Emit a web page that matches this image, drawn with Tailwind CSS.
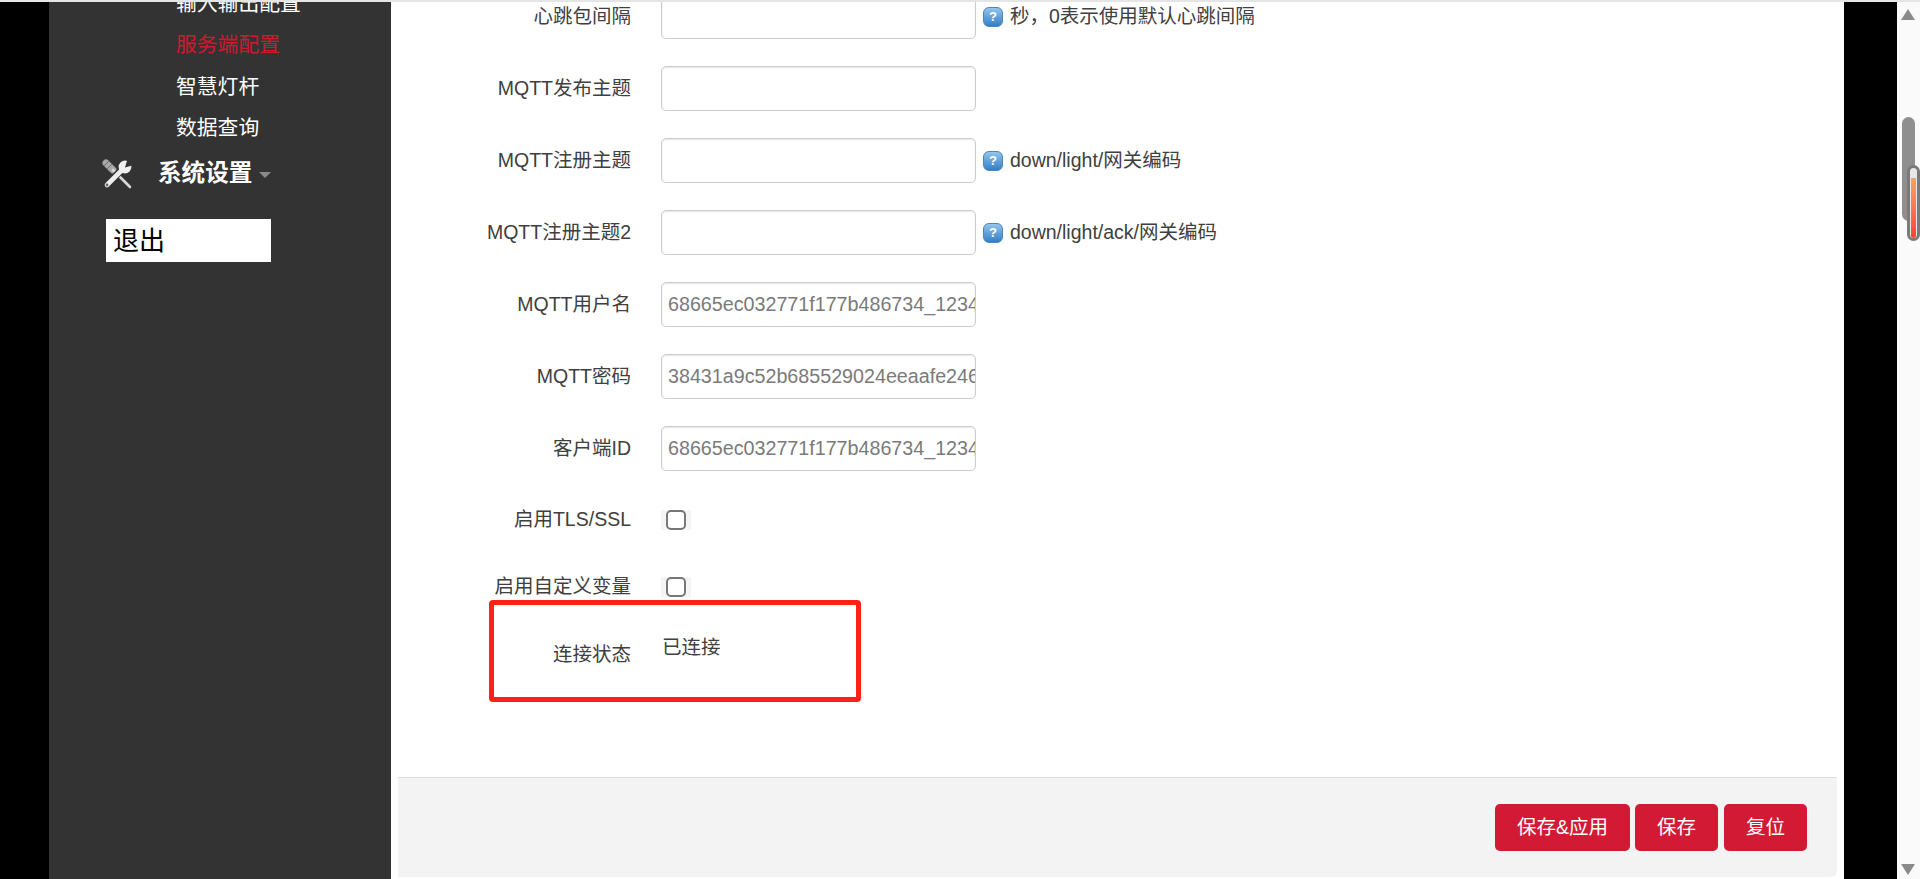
<!DOCTYPE html>
<html lang="zh-CN">
<head>
<meta charset="utf-8">
<title>服务端配置</title>
<script src="https://cdn.jsdelivr.net/npm/@tailwindcss/browser@4"></script>
</head>
<body class="m-0 overflow-hidden">
<div class="flex h-[879px] w-[1920px] overflow-hidden border-t-2 border-[#e5e5e5] bg-black font-['Liberation_Sans','Noto_Sans_CJK_SC',sans-serif] text-[19.5px] text-[#404040]">
  <div class="w-[49px] shrink-0 bg-black"></div>

  <aside class="w-[342px] shrink-0 overflow-hidden bg-[#333333] text-white">
    <ul class="-mt-[19.5px] pl-[127px] text-[20.8px]">
      <li class="flex h-[41.5px] items-center">输入输出配置</li>
      <li class="flex h-[41.5px] items-center text-[#d0192f]">服务端配置</li>
      <li class="flex h-[41.5px] items-center">智慧灯杆</li>
      <li class="flex h-[41.5px] items-center">数据查询</li>
    </ul>
    <div class="flex h-[51.5px] items-center pl-[53px]">
      <svg class="h-[31px] w-[31px] shrink-0" viewBox="0 0 31 31" fill="none">
        <line x1="4" y1="4" x2="11" y2="11" stroke="#a8a8a8" stroke-width="7" stroke-linecap="round"/>
        <line x1="2" y1="7" x2="7" y2="2" stroke="#6e6e6e" stroke-width="1"/>
        <line x1="5" y1="10" x2="10" y2="5" stroke="#6e6e6e" stroke-width="1"/>
        <line x1="11" y1="11" x2="28" y2="28" stroke="#d8d8d8" stroke-width="2.6" stroke-linecap="round"/>
        <line x1="17.5" y1="13" x2="12.5" y2="18" stroke="#333333" stroke-width="7"/>
        <line x1="5" y1="26" x2="21" y2="10" stroke="#eeeeee" stroke-width="4.6" stroke-linecap="round"/>
        <circle cx="23" cy="8" r="6.4" fill="#eeeeee"/>
        <path d="M23 8.5 L25.5 0 L32 0 L32 6 Z" fill="#333333"/>
        <circle cx="5" cy="26" r="1.4" fill="#666666"/>
      </svg>
      <span class="ml-[25px] text-[23.6px] font-bold leading-none">系统设置</span>
      <span class="ml-[7px] mt-[2px] h-0 w-0 border-x-[6px] border-t-[6px] border-x-transparent border-t-[#8a8a8a]"></span>
    </div>
    <a class="ml-[57px] mt-[19px] flex h-[43px] w-[165px] items-center bg-white pl-[7px] text-[26px] leading-none text-black">退出</a>
  </aside>

  <main class="relative flex w-[1453px] shrink-0 flex-col bg-white pl-[7px] pr-[7px]">
    <form class="min-h-0 flex-1 overflow-hidden">
      <div class="-mt-[8px] flex flex-col">
        <div class="flex h-[45px] items-center">
          <label class="w-[233px] shrink-0 text-right">心跳包间隔</label>
          <input type="text" class="ml-[30px] h-[45px] w-[315px] rounded-[5px] border border-[#cccccc] bg-white pl-[6px] shadow-[inset_0_1px_2px_rgba(0,0,0,0.1)]">
          <span class="ml-[7px] flex h-[20px] w-[20px] items-center justify-center rounded-[6px] border border-[#4f86b8] bg-linear-to-b from-[#93c4ee] to-[#2f80c8] text-[13px] font-bold leading-none text-white">?</span>
          <span class="ml-[7px]">秒，0表示使用默认心跳间隔</span>
        </div>
        <div class="mt-[27px] flex h-[45px] items-center">
          <label class="w-[233px] shrink-0 text-right">MQTT发布主题</label>
          <input type="text" class="ml-[30px] h-[45px] w-[315px] rounded-[5px] border border-[#cccccc] bg-white pl-[6px] shadow-[inset_0_1px_2px_rgba(0,0,0,0.1)]">
        </div>
        <div class="mt-[27px] flex h-[45px] items-center">
          <label class="w-[233px] shrink-0 text-right">MQTT注册主题</label>
          <input type="text" class="ml-[30px] h-[45px] w-[315px] rounded-[5px] border border-[#cccccc] bg-white pl-[6px] shadow-[inset_0_1px_2px_rgba(0,0,0,0.1)]">
          <span class="ml-[7px] flex h-[20px] w-[20px] items-center justify-center rounded-[6px] border border-[#4f86b8] bg-linear-to-b from-[#93c4ee] to-[#2f80c8] text-[13px] font-bold leading-none text-white">?</span>
          <span class="ml-[7px]">down/light/网关编码</span>
        </div>
        <div class="mt-[27px] flex h-[45px] items-center">
          <label class="w-[233px] shrink-0 text-right">MQTT注册主题2</label>
          <input type="text" class="ml-[30px] h-[45px] w-[315px] rounded-[5px] border border-[#cccccc] bg-white pl-[6px] shadow-[inset_0_1px_2px_rgba(0,0,0,0.1)]">
          <span class="ml-[7px] flex h-[20px] w-[20px] items-center justify-center rounded-[6px] border border-[#4f86b8] bg-linear-to-b from-[#93c4ee] to-[#2f80c8] text-[13px] font-bold leading-none text-white">?</span>
          <span class="ml-[7px]">down/light/ack/网关编码</span>
        </div>
        <div class="mt-[27px] flex h-[45px] items-center">
          <label class="w-[233px] shrink-0 text-right">MQTT用户名</label>
          <input type="text" readonly value="68665ec032771f177b486734_123456789" class="ml-[30px] h-[45px] w-[315px] rounded-[5px] border border-[#cccccc] bg-white pl-[6px] text-[19.7px] text-[#7a7a7a] shadow-[inset_0_1px_2px_rgba(0,0,0,0.1)]">
        </div>
        <div class="mt-[27px] flex h-[45px] items-center">
          <label class="w-[233px] shrink-0 text-right">MQTT密码</label>
          <input type="text" readonly value="38431a9c52b685529024eeaafe2460000" class="ml-[30px] h-[45px] w-[315px] rounded-[5px] border border-[#cccccc] bg-white pl-[6px] text-[19.7px] text-[#7a7a7a] shadow-[inset_0_1px_2px_rgba(0,0,0,0.1)]">
        </div>
        <div class="mt-[27px] flex h-[45px] items-center">
          <label class="w-[233px] shrink-0 text-right">客户端ID</label>
          <input type="text" readonly value="68665ec032771f177b486734_123456789" class="ml-[30px] h-[45px] w-[315px] rounded-[5px] border border-[#cccccc] bg-white pl-[6px] text-[19.7px] text-[#7a7a7a] shadow-[inset_0_1px_2px_rgba(0,0,0,0.1)]">
        </div>
        <div class="mt-[39px] flex h-[20px] items-center">
          <label class="w-[233px] shrink-0 text-right">启用TLS/SSL</label>
          <span class="ml-[30px] flex h-[20px] w-[30px] items-center justify-center bg-[#f5f5f5]">
            <input type="checkbox" class="h-[20px] w-[20px] appearance-none rounded-[5px] border-2 border-[#777777] bg-white">
          </span>
        </div>
        <div class="mt-[47px] flex h-[20px] items-center">
          <label class="w-[233px] shrink-0 text-right">启用自定义变量</label>
          <span class="ml-[30px] flex h-[20px] w-[30px] items-center justify-center bg-[#f5f5f5]">
            <input type="checkbox" class="h-[20px] w-[20px] appearance-none rounded-[5px] border-2 border-[#777777] bg-white">
          </span>
        </div>
        <div class="mt-[36px] flex items-start leading-[28px]">
          <label class="w-[233px] shrink-0 pt-[7px] text-right">连接状态</label>
          <span class="ml-[31px]">已连接</span>
        </div>
      </div>
    </form>

    <footer class="mb-[2px] flex h-[100px] shrink-0 items-start justify-end rounded-br-[6px] border-t border-[#dddddd] bg-[#f3f3f3] pr-[30px] pt-[26px] text-white">
      <button class="h-[47px] w-[135px] rounded-[5px] bg-[#d31a34]">保存&amp;应用</button>
      <button class="ml-[5px] h-[47px] w-[83px] rounded-[5px] bg-[#d31a34]">保存</button>
      <button class="ml-[6px] h-[47px] w-[83px] rounded-[5px] bg-[#d31a34]">复位</button>
    </footer>

    <div class="absolute left-[98px] top-[598px] h-[102px] w-[372px] rounded-[4px] border-[5px] border-[#ff2016]"></div>
  </main>

  <div class="w-[53px] shrink-0 bg-black"></div>

  <div class="relative w-[23px] shrink-0 bg-[#fafafa]">
    <span class="absolute left-[4px] top-[7px] h-0 w-0 border-x-[7.5px] border-b-[11px] border-x-transparent border-b-[#8a8a8a]"></span>
    <span class="absolute left-[5px] top-[115px] h-[104px] w-[13px] rounded-[7px] bg-[#8f8f8f]"></span>
    <span class="absolute left-[10px] top-[163px] flex h-[76px] w-[13px] items-end justify-center overflow-hidden rounded-[7px] border-[3px] border-[#7a7a7a] bg-[#e8e8e8]">
      <span class="h-[60px] w-[5px] rounded-b-[3px] bg-linear-to-b from-[#f7a35c] to-[#ff3b3b]"></span>
    </span>
    <span class="absolute bottom-[4px] left-[4px] h-0 w-0 border-x-[7.5px] border-t-[11px] border-x-transparent border-t-[#8a8a8a]"></span>
  </div>
</div>
</body>
</html>
